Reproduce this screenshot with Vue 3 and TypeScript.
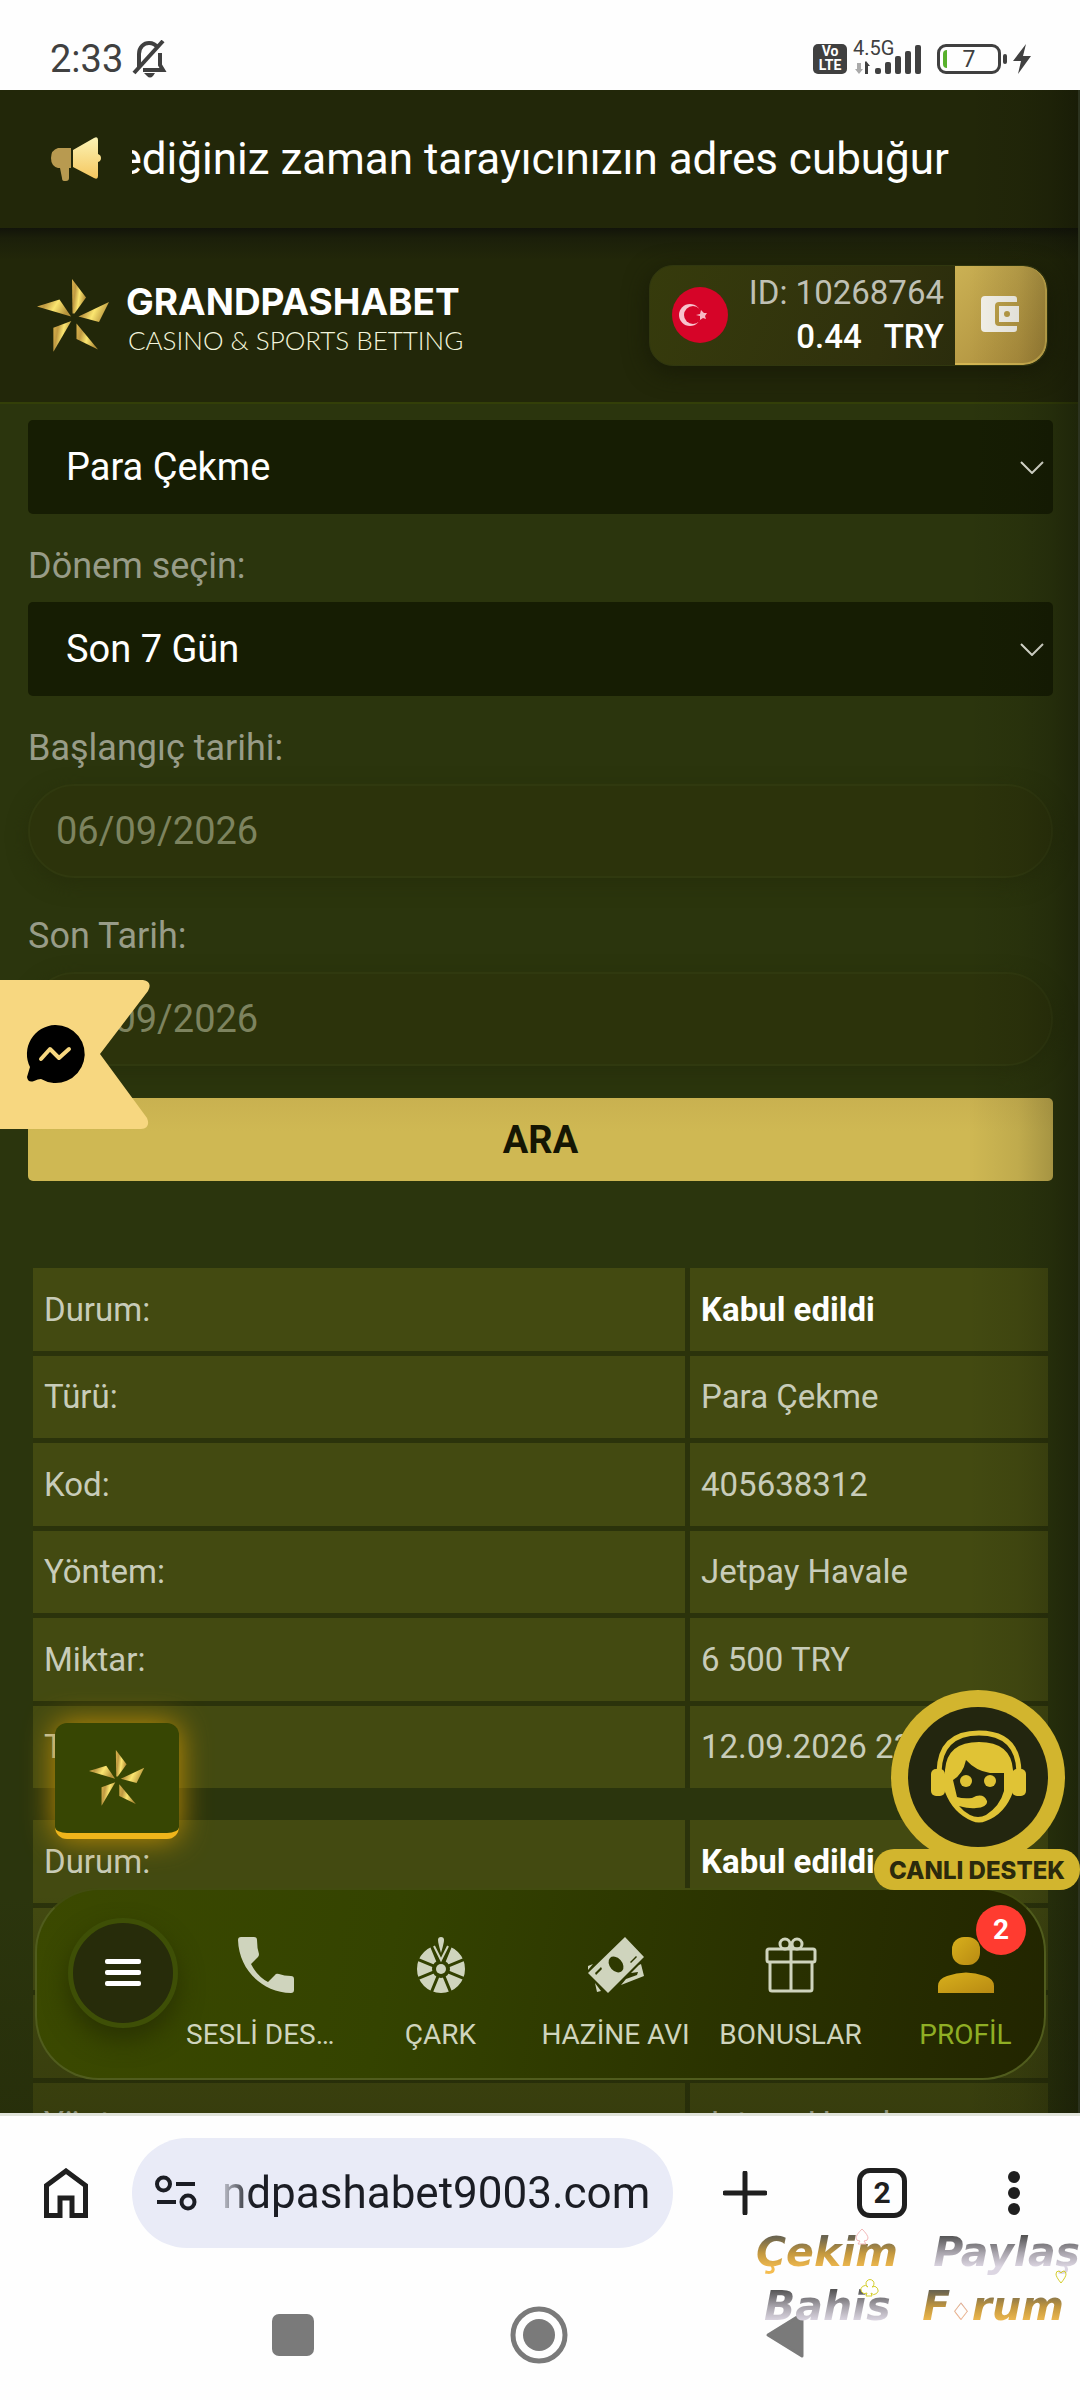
<script setup lang="ts">
import { ref } from 'vue'

interface Row {
  label: string
  value: string
  strong?: boolean
}

const kind = ref('Para Çekme')
const period = ref('Son 7 Gün')
const startDate = ref('06/09/2026')
const endDate = ref('13/09/2026')

const records: Row[][] = [
  [
    { label: 'Durum:', value: 'Kabul edildi', strong: true },
    { label: 'Türü:', value: 'Para Çekme' },
    { label: 'Kod:', value: '405638312' },
    { label: 'Yöntem:', value: 'Jetpay Havale' },
    { label: 'Miktar:', value: '6 500 TRY' },
    { label: 'Tarih:', value: '12.09.2026 23:10' },
  ],
  [
    { label: 'Durum:', value: 'Kabul edildi', strong: true },
    { label: 'Türü:', value: 'Para Çekme' },
    { label: 'Kod:', value: '405638297' },
    { label: 'Yöntem:', value: 'Jetpay Havale' },
  ],
]

const blades = [
  '35,0 49,18.5 37.5,34.5 35.5,34.5',
  '72,23 62,43 41.5,37.5',
  '39.5,44.5 39.5,60 61,70.5',
  '34.3,42 16.4,48.7 16.4,72.7',
  '0,27.5 22.5,20.5 34,37.5',
]
</script>

<template>
  <div class="screen">
    <div class="status">
      <div class="status-left">
        <span class="clock">2:33</span>
        <svg class="bell" viewBox="0 0 36 38" fill="none" stroke="#404040" stroke-width="4">
          <path d="M8 27V14c0-7 5-11 10-11 4 0 7 2 9 5M29 13v12l3 5H12" />
          <path d="M32 1 3 33" />
          <path d="M13 33h11l-2 3q-3 3-6 0z" fill="#404040" stroke="none" />
        </svg>
      </div>
      <div class="status-right">
        <span class="volte"><span>Vo</span><span>LTE</span></span>
        <span class="signal">
          <span class="net">4.5G</span>
          <svg viewBox="0 0 72 30" fill="#404040">
            <path d="M4 19h4v6h2l-4 5-4-5h2z" fill="#aaa" />
            <path d="M12 30h3V22h2l-4-5-1 1z" />
            <rect x="22" y="24" width="6" height="6" rx="2" />
            <rect x="32" y="18" width="6" height="12" rx="2" />
            <rect x="42" y="12" width="6" height="18" rx="2" />
            <rect x="52" y="7" width="6" height="23" rx="2" />
            <rect x="62" y="1" width="6" height="29" rx="2" />
          </svg>
        </span>
        <span class="battery"><span class="charge"></span>7</span>
        <svg class="bolt" viewBox="0 0 20 30" fill="#404040"><path d="M14 0 1 17h8L6 30 19 12h-8z" /></svg>
      </div>
    </div>

    <div class="page">
      <svg class="defs" aria-hidden="true">
        <defs>
          <linearGradient id="gold" x1="0" y1="0" x2="1" y2="0.3">
            <stop offset="0" stop-color="#dcb44c" />
            <stop offset="0.3" stop-color="#c09a42" />
            <stop offset="0.6" stop-color="#fbe670" />
            <stop offset="1" stop-color="#b8943c" />
          </linearGradient>
          <linearGradient id="horn" x1="0" y1="0" x2="0" y2="1">
            <stop offset="0" stop-color="#fbf3b5" />
            <stop offset="1" stop-color="#f5c75f" />
          </linearGradient>
          <linearGradient id="person" x1="0" y1="0" x2="1" y2="1">
            <stop offset="0" stop-color="#d8b01c" />
            <stop offset="1" stop-color="#b88a12" />
          </linearGradient>
        </defs>
      </svg>

      <div class="ticker">
        <svg class="horn" viewBox="0 0 50 44">
          <path d="M7 11h13v20h-2v10q0 3-3 3h-2q-2 0-2-3l-2-10H7q-7-2-7-10T7 11z" fill="#b89a50" />
          <path d="M22 13 43 1q4-2 4 2v14q3 1 3 4t-3 4v14q0 4-4 2L22 30z" fill="url(#horn)" />
        </svg>
        <div class="ticker-text"><span>ediğiniz zaman tarayıcınızın adres cubuğur</span></div>
      </div>

      <header class="header">
        <a class="brand" href="#">
          <svg class="brand-star" viewBox="0 0 73 73">
            <polygon v-for="b in blades" :key="b" :points="b" fill="url(#gold)" />
          </svg>
          <span class="brand-text">
            <span class="brand-name">GRANDPASHABET</span>
            <span class="brand-sub">CASINO &amp; SPORTS BETTING</span>
          </span>
        </a>
        <div class="balance">
          <svg class="flag" viewBox="0 0 56 56">
            <circle cx="28" cy="28" r="28" fill="#d60428" />
            <circle cx="18" cy="28" r="11" fill="#f7c3cd" />
            <circle cx="21" cy="28" r="9" fill="#d60428" />
            <path d="m24 28 4-1 1-4 3 3 3 0-2 3 1 3-3-1-3 2v-4z" fill="#f7b9c5" />
          </svg>
          <div class="account">
            <span class="account-id">ID: 10268764</span>
            <span class="account-sum"><span>0.44</span><span>TRY</span></span>
          </div>
          <button class="wallet" type="button" aria-label="Cüzdan">
            <svg viewBox="0 0 38 36">
              <path d="M4 0h29q3 0 3 3v3H18q-4 0-4 4v16q0 4 4 4h18v3q0 3-3 3H4q-4 0-4-4V4q0-4 4-4z" fill="#f4f2ea" />
              <path d="M18 10h20v16H18zM26 15a3 3 0 1 0 0 6 3 3 0 0 0 0-6z" fill="#f4f2ea" fill-rule="evenodd" />
            </svg>
          </button>
        </div>
      </header>

      <main class="content">
        <form class="filters" @submit.prevent>
          <div class="select-box">
            <select v-model="kind" aria-label="Tür"><option>Para Çekme</option></select>
            <svg class="chevron" viewBox="0 0 24 13"><path d="m1 1 11 11L23 1" fill="none" stroke="#e6e8dc" stroke-width="2" /></svg>
          </div>
          <label for="period">Dönem seçin:</label>
          <div class="select-box">
            <select id="period" v-model="period"><option>Son 7 Gün</option></select>
            <svg class="chevron" viewBox="0 0 24 13"><path d="m1 1 11 11L23 1" fill="none" stroke="#e6e8dc" stroke-width="2" /></svg>
          </div>
          <label for="start">Başlangıç tarihi:</label>
          <input id="start" v-model="startDate" type="text" />
          <label for="end">Son Tarih:</label>
          <input id="end" v-model="endDate" type="text" />
          <button class="search" type="submit">ARA</button>
        </form>

        <table v-for="(rows, i) in records" :key="i" class="record">
          <tbody>
            <tr v-for="row in rows" :key="row.label">
              <th scope="row">{{ row.label }}</th>
              <td :class="{ strong: row.strong }">{{ row.value }}</td>
            </tr>
          </tbody>
        </table>
      </main>

      <div class="edge"></div>

      <button class="ribbon" type="button" aria-label="Messenger">
        <svg viewBox="0 0 150 149">
          <path d="M0 0h143q10 2 5 11L100 74l47 64q4 10-6 11H0z" fill="#f7d780" />
          <path d="M55 45a29 29 0 1 1-14 54q-3 0-7 2-6 2-7-4l3-10A29 29 0 0 1 55 45z" fill="#000" />
          <path d="m41 79 9-10 9 9 10-9" fill="none" stroke="#f7d780" stroke-width="4" stroke-linecap="round" stroke-linejoin="round" />
        </svg>
      </button>

      <button class="star-button" type="button" aria-label="Oyunlar">
        <svg viewBox="0 0 73 73">
          <polygon v-for="b in blades" :key="b" :points="b" fill="url(#gold)" />
        </svg>
      </button>

      <nav class="dock">
        <button class="menu" type="button" aria-label="Menü">
          <svg viewBox="0 0 36 28" fill="#fff">
            <rect width="36" height="5" rx="2" /><rect y="11" width="36" height="5" rx="2" /><rect y="22" width="36" height="5" rx="2" />
          </svg>
        </button>
        <a class="item" href="#">
          <svg viewBox="0 0 56 56"><path d="M3 0h13q3 0 3 3 0 8 2 14 0 2-1 3l-7 7q6 12 17 18l7-7q1-2 4-1 5 2 12 2 3 0 3 3v11q0 3-3 3C24 55 1 33 0 3q0-3 3-3z" fill="#cfd4bd" /></svg>
          <span class="cut">SESLİ DES…</span>
        </a>
        <a class="item" href="#">
          <svg viewBox="0 0 56 56">
            <mask id="spokes" maskUnits="userSpaceOnUse" x="0" y="0" width="56" height="56">
              <rect width="56" height="56" fill="#fff" />
              <path d="m17.600 6.900 20.800 50.200M38.400 6.900 17.600 57.100M2.900 21.600 53.100 42.400M2.900 42.400 53.100 21.600" stroke="#000" stroke-width="3" />
              <path d="M18 0h20v8L28 32 18 8z" fill="#000" />
            </mask>
            <circle cx="28" cy="32" r="16.500" fill="none" stroke="#cfd4bd" stroke-width="15" mask="url(#spokes)" />
            <circle cx="28" cy="32" r="5" fill="#cfd4bd" />
            <path d="m21 9 7 14 7-14" fill="none" stroke="#cfd4bd" stroke-width="2" />
            <path d="M25 3q0-3 3-3t3 3-3 13q-3-10-3-13z" fill="#cfd4bd" />
          </svg>
          <span>ÇARK</span>
        </a>
        <a class="item" href="#">
          <svg viewBox="0 0 56 56">
            <path d="m0 29 5-2-5 6zm7 17 6 8-4 1zM53 27l3 12-23 9 5-6 11-4 1-3-7 1 8-8z" fill="#cfd4bd" />
            <path d="M37 0 56 20 20 56 0 36zM22 21a5 7 -40 1 0 12 13 5 7 -40 0 0-12-13zM7 36l6-6 1 2-6 6zM42 25l6-6 1 1-6 6z" fill="#cfd4bd" fill-rule="evenodd" />
          </svg>
          <span>HAZİNE AVI</span>
        </a>
        <a class="item" href="#">
          <svg viewBox="0 0 56 56" fill="none" stroke="#cfd4bd" stroke-width="3">
            <rect x="4" y="12" width="48" height="13" rx="2" />
            <path d="M7 25v27q0 2 2 2h38q2 0 2-2V25M28 6v48" />
            <circle cx="22" cy="7" r="5" /><circle cx="34" cy="7" r="5" />
          </svg>
          <span>BONUSLAR</span>
        </a>
        <a class="item active" href="#">
          <svg viewBox="0 0 56 56" fill="url(#person)">
            <rect x="14" y="0" width="28" height="28" rx="12" />
            <path d="M0 56v-7q0-7 9-10 19-7 38 0 9 3 9 10v7z" />
          </svg>
          <span>PROFİL</span>
          <b class="badge">2</b>
        </a>
      </nav>

      <button class="support" type="button">
        <svg viewBox="0 0 206 180">
          <circle cx="104" cy="87" r="87" fill="#d2b52e" />
          <circle cx="104" cy="87" r="70" fill="#23260f" />
          <path d="M65 82Q66 43 105 43t40 39" fill="none" stroke="#e0c335" stroke-width="5" />
          <path d="M71 80q2-28 34-28t34 28v22q-8 22-27 29-7 3-14 0-19-8-27-29z" fill="#e0c335" />
          <path d="M79 90q10-6 13-20 10 11 24 13h14v18q-4 15-18 24-8 4-16 0-7-4-11-9 11 3 17 2 12-1 11-7-4-9-15-3-9 1-15-1z" fill="#23260f" />
          <circle cx="92" cy="91" r="6" fill="#e0c335" /><circle cx="116" cy="91" r="6" fill="#e0c335" />
          <rect x="57" y="79" width="14" height="27" rx="5" fill="#e0c335" />
          <rect x="138" y="79" width="14" height="27" rx="5" fill="#e0c335" />
        </svg>
        <span>CANLI DESTEK</span>
      </button>
    </div>

    <div class="browser">
      <button class="plain" type="button" aria-label="Ana sayfa">
        <svg width="44" height="50" viewBox="0 0 44 50"><path d="M2.500 17.500 22 3l19.500 14.500v30H28V30H16v17.500H2.500z" fill="none" stroke="#1f1f1f" stroke-width="5" /></svg>
      </button>
      <div class="address">
        <svg width="42" height="36" viewBox="0 0 42 36" fill="none" stroke="#1b1d24" stroke-width="4">
          <circle cx="8.500" cy="9" r="6.500" /><circle cx="33" cy="27" r="6.500" />
          <path d="M21 9h19M2 27h19" />
        </svg>
        <span>ndpashabet9003.com</span>
      </div>
      <button class="plain plus" type="button" aria-label="Yeni sekme">
        <svg width="44" height="44" viewBox="0 0 44 44"><path d="M22 2v40M2 22h40" stroke="#1f1f1f" stroke-width="5" stroke-linecap="round" /></svg>
      </button>
      <button class="plain tabs" type="button">2</button>
      <button class="plain dots" type="button" aria-label="Daha fazla">
        <svg width="12" height="46" viewBox="0 0 12 46" fill="#1f1f1f"><circle cx="6" cy="7" r="6" /><circle cx="6" cy="23" r="6" /><circle cx="6" cy="39" r="6" /></svg>
      </button>
    </div>

    <div class="system">
      <button class="plain" type="button" aria-label="Son uygulamalar">
        <svg width="42" height="42" viewBox="0 0 42 42"><rect width="42" height="42" rx="7" fill="#7a7a7a" /></svg>
      </button>
      <button class="plain" type="button" aria-label="Ana ekran">
        <svg width="58" height="58" viewBox="0 0 58 58"><circle cx="29" cy="29" r="26" fill="none" stroke="#7a7a7a" stroke-width="5" /><circle cx="29" cy="29" r="16" fill="#7a7a7a" /></svg>
      </button>
      <button class="plain" type="button" aria-label="Geri">
        <svg width="42" height="48" viewBox="0 0 42 48"><path d="M4 24 38 3v42z" fill="#7a7a7a" stroke="#7a7a7a" stroke-width="3" stroke-linejoin="round" /></svg>
      </button>
      <div class="mark">
        <div class="mark-line"><span class="warm">Çekim</span><span class="cool">Paylaş</span></div>
        <div class="mark-line second"><span class="cool">Bahis</span><span class="warm">F<i>♢</i>rum</span></div>
        <svg class="suits" viewBox="0 0 324 110" fill="none" stroke-width="1">
          <path d="M106 4q6 6 6 9 0 3-4 3l2 3h-8l2-3q-4 0-4-3 0-3 6-9z" stroke="#f3b9b9" fill="#fff" />
          <path d="M305 58q-5-6-5-9 0-3 3-3l2 2 2-2q3 0 3 3 0 3-5 9z" stroke="#d4ce2c" />
          <path d="M112 62a4 4 0 1 1 4 0 4 4 0 1 1-1 6l1 3h-6l1-3a4 4 0 1 1 1-6z" stroke="#d4ce2c" fill="#fff" />
        </svg>
      </div>
    </div>
  </div>
</template>

<style>
html,
body {
  margin: 0;
  background: #fff;
}
</style>

<style scoped>
* {
  box-sizing: border-box;
}

.screen {
  display: flex;
  flex-direction: column;
  height: 100vh;
  overflow: hidden;
  background: #fefefe;
  font-family: Roboto, 'Noto Sans', sans-serif;
}

button,
select,
input {
  margin: 0;
  padding: 0;
  border: 0;
  font: inherit;
  color: inherit;
  appearance: none;
}

svg {
  display: block;
}

a {
  color: inherit;
  text-decoration: none;
}

/* phone status bar */
.status {
  display: flex;
  flex: none;
  align-items: center;
  justify-content: space-between;
  height: 90px;
  padding: 28px 48px 0 50px;
  color: #404040;
}

.status-left,
.status-right {
  display: flex;
  align-items: center;
}

.status-left {
  gap: 8px;
}

.clock {
  font-size: 38px;
}

.bell {
  width: 36px;
  height: 38px;
}

.volte {
  display: flex;
  flex-direction: column;
  align-items: center;
  width: 34px;
  height: 30px;
  margin-right: 6px;
  border-radius: 5px;
  background: #404040;
  color: #fff;
  font-size: 14px;
  font-weight: 700;
  line-height: 14px;
}

.signal {
  position: relative;
  width: 72px;
  height: 30px;
}

.signal svg {
  width: 72px;
  height: 30px;
}

.net {
  position: absolute;
  left: 0;
  bottom: 16px;
  font-size: 20px;
  line-height: 20px;
}

.battery {
  position: relative;
  display: flex;
  align-items: center;
  justify-content: center;
  width: 64px;
  height: 30px;
  margin: 0 11px 0 12px;
  border: 3px solid #404040;
  border-radius: 9px;
  font-size: 23px;
}

.battery::after {
  content: '';
  position: absolute;
  right: -9px;
  top: 7px;
  width: 4px;
  height: 10px;
  border-radius: 2px;
  background: #404040;
}

.charge {
  position: absolute;
  left: 3px;
  top: 3px;
  width: 4px;
  height: 18px;
  border-radius: 4px 0 0 4px;
  background: #58b12c;
}

.bolt {
  width: 20px;
  height: 30px;
}

/* web page */
.page {
  position: relative;
  flex: 1;
  min-height: 0;
  overflow: hidden;
  border-bottom: 3px solid #e0e3da;
  background: #2b350d;
}

.defs {
  position: absolute;
  width: 0;
  height: 0;
}

.ticker {
  display: flex;
  align-items: center;
  height: 138px;
  padding: 0 131px 0 51px;
  background: #222709;
}

.horn {
  flex: none;
  width: 50px;
  height: 44px;
  margin-right: 31px;
}

.ticker-text {
  display: flex;
  flex: 1;
  justify-content: flex-end;
  min-width: 0;
  overflow: hidden;
  color: #fff;
  font-size: 44px;
  line-height: 56px;
  white-space: nowrap;
}

.header {
  display: flex;
  align-items: center;
  justify-content: space-between;
  height: 176px;
  padding: 0 32px 0 37px;
  border-bottom: 2px solid #333f08;
  background: linear-gradient(#12140a, #1b1f0a 10px, #222709 32px);
}

.brand {
  display: flex;
  align-items: center;
  gap: 16px;
}

.brand-star {
  width: 73px;
  height: 73px;
}

.brand-text {
  display: flex;
  flex-direction: column;
  padding-top: 10px;
  color: #fff;
  white-space: nowrap;
}

.brand-name {
  font-family: Inter, sans-serif;
  font-size: 37px;
  font-weight: 700;
  line-height: 40px;
}

.brand-sub {
  padding-left: 2px;
  font-family: Lato, sans-serif;
  font-size: 26px;
  font-weight: 300;
  line-height: 36px;
  color: #f3f5dc;
}

.balance {
  display: flex;
  align-items: center;
  width: 399px;
  height: 101px;
  padding-left: 22px;
  border: 1px solid #30370f;
  border-radius: 24px;
  background: linear-gradient(110deg, #363b0c, #30310d 60%, #25280c);
  box-shadow: 0 6px 24px #181b07;
  overflow: hidden;
}

.flag {
  flex: none;
  width: 56px;
  height: 56px;
}

.account {
  display: flex;
  flex: 1;
  flex-direction: column;
  align-items: flex-end;
  padding-right: 11px;
  line-height: 44px;
  white-space: nowrap;
}

.account-id {
  color: #bfc0b4;
  font-size: 33px;
}

.account-sum {
  display: flex;
  gap: 22px;
  color: #fff;
  font-size: 33px;
  font-weight: 500;
}

.wallet {
  display: flex;
  align-items: center;
  justify-content: center;
  width: 92px;
  height: 100%;
  border-right: 2px solid #d3b552;
  border-bottom: 2px solid #d3b552;
  border-radius: 0 24px 24px 0;
  background: linear-gradient(135deg, #cbb154, #a98a3a);
}

.wallet svg {
  width: 38px;
  height: 36px;
}

.content {
  padding: 16px 27px 0 28px;
}

.filters {
  display: flex;
  flex-direction: column;
}

.filters label {
  padding: 32px 0 16px;
  color: #989c88;
  font-size: 36px;
  line-height: 40px;
}

.select-box {
  position: relative;
}

.select-box select {
  width: 100%;
  height: 94px;
  padding: 0 38px;
  border-radius: 5px;
  background: #161d03;
  color: #fff;
  font-size: 38px;
}

.chevron {
  position: absolute;
  right: 9px;
  top: 41px;
  width: 24px;
  height: 13px;
  pointer-events: none;
}

.filters input {
  height: 94px;
  margin-bottom: 6px;
  padding: 0 26px;
  border: 2px solid #30390f;
  border-radius: 47px;
  background: #2c330b;
  box-shadow: 0 6px 20px #272f0b;
  color: #7d835f;
  font-size: 38px;
}

.search {
  height: 83px;
  margin-top: 26px;
  border-radius: 5px;
  background: linear-gradient(#c9b150, #cfb853 40%);
  color: #151603;
  font-size: 38px;
  font-weight: 700;
}

.record {
  width: calc(100% - 10px);
  margin: 32px 5px 0;
  border-collapse: separate;
  border-spacing: 0;
  table-layout: fixed;
  color: #c8ccb9;
  font-size: 33px;
  line-height: 40px;
}

.filters + .record {
  margin-top: 87px;
}

.record th,
.record td {
  height: 88px;
  padding: 0 11px;
  border-bottom: 5px solid #2b330b;
  background: #434a11;
  font-weight: 400;
  text-align: left;
}

.record tr:nth-child(even) > * {
  height: 87px;
}

.record tr:last-child > * {
  height: 82px;
  border-bottom: 0;
}

.record th {
  width: 657px;
  border-right: 5px solid #2b330b;
}

.record td.strong {
  color: #fff;
  font-weight: 700;
}

/* shade along the right side and towards the foot of the page */
.edge {
  position: absolute;
  inset: 0;
  border-right: 2px solid #2c331f;
  background:
    linear-gradient(to left, #0c0e0466, #0c0e0433 28px, #0c0e0414 60px, transparent 110px),
    linear-gradient(to top, #20240655, transparent 220px);
  pointer-events: none;
}

.ribbon {
  position: absolute;
  left: 0;
  top: 890px;
  width: 150px;
  height: 149px;
  background: none;
}

.star-button {
  position: absolute;
  left: 55px;
  bottom: 274px;
  display: flex;
  align-items: center;
  justify-content: center;
  width: 124px;
  height: 116px;
  border-bottom: 6px solid #efb51b;
  border-radius: 12px;
  background: #374603;
  box-shadow: 0 0 30px #c48f05;
}

.star-button svg {
  width: 56px;
  height: 56px;
}

.dock {
  position: absolute;
  left: 35px;
  right: 34px;
  bottom: 33px;
  display: flex;
  align-items: center;
  height: 192px;
  padding-left: 31px;
  border: 2px solid #505c1d;
  border-top-color: #424c10;
  border-radius: 64px;
  background: linear-gradient(100deg, #3b4900, #344300 35%, #2a3200 70%, #222500);
}

.menu {
  display: flex;
  flex: none;
  align-items: center;
  justify-content: center;
  width: 110px;
  height: 110px;
  margin-bottom: 22px;
  border: 5px solid #3e4f06;
  border-radius: 50%;
  background: #272c0a;
  box-shadow: 0 12px 24px #2a3302;
}

.menu svg {
  width: 36px;
  height: 28px;
}

.item {
  position: relative;
  display: flex;
  flex: 1 0 175px;
  flex-direction: column;
  align-items: center;
  padding-top: 22px;
  color: #cfd4bd;
  font-size: 28px;
  line-height: 36px;
  white-space: nowrap;
}

.item svg {
  width: 56px;
  height: 56px;
  margin-bottom: 24px;
}

.cut {
  align-self: flex-start;
  padding-left: 8px;
}

.active {
  color: #8fae24;
}

.badge {
  position: absolute;
  left: 98px;
  top: -10px;
  width: 50px;
  height: 50px;
  border-radius: 50%;
  background: #ff3b30;
  color: #fff;
  font-size: 28px;
  font-weight: 700;
  line-height: 50px;
  text-align: center;
}

.support {
  position: absolute;
  right: 0;
  bottom: 223px;
  width: 206px;
  background: none;
}

.support svg {
  width: 206px;
  height: 180px;
}

.support span {
  display: block;
  height: 41px;
  margin-top: -21px;
  border-radius: 20px;
  background: #d2b52e;
  position: relative;
  color: #2b2a0c;
  font-family: Inter, sans-serif;
  font-size: 24px;
  font-weight: 800;
  line-height: 43px;
  text-align: center;
}

/* browser toolbar */
.browser {
  display: flex;
  flex: none;
  align-items: center;
  height: 154px;
  padding: 0 60px 0 44px;
}

.plain {
  flex: none;
  background: none;
}

.address {
  display: flex;
  flex: 1;
  align-items: center;
  gap: 25px;
  min-width: 0;
  height: 110px;
  margin-left: 44px;
  padding: 0 23px;
  border-radius: 55px;
  background: #e9ebf7;
}

.address svg {
  flex: none;
}

.address span {
  background: linear-gradient(to right, #1b1d2430, #1b1d24 30px);
  background-clip: text;
  color: transparent;
  font-size: 44px;
  line-height: 60px;
  white-space: nowrap;
}

.plus {
  margin: 0 90px 0 50px;
}

.tabs {
  width: 50px;
  height: 50px;
  border: 5px solid #1f1f1f;
  border-radius: 13px;
  color: #1f1f1f;
  font-size: 30px;
  font-weight: 700;
  line-height: 40px;
}

.dots {
  margin-left: 101px;
}

/* system navigation */
.system {
  position: relative;
  display: flex;
  flex: none;
  align-items: center;
  justify-content: space-between;
  height: 130px;
  padding: 0 274px 0 272px;
}

.mark {
  position: absolute;
  right: 0;
  top: -45px;
  width: 324px;
  font-family: 'DejaVu Sans', sans-serif;
  font-size: 41px;
  font-style: italic;
  font-weight: 700;
  pointer-events: none;
}

.mark-line {
  display: flex;
  justify-content: space-between;
  height: 54px;
  line-height: 54px;
}

.second {
  padding: 0 16px 0 8px;
}

.warm,
.cool {
  background: linear-gradient(#6a6450 12px, #c2973f 28px, #f5bd50 44px);
  background-clip: text;
  color: transparent;
}

.cool {
  background-image: linear-gradient(#505050 10px, #a9a5ad 28px, #dcd6e2 42px);
}

.warm i {
  color: #f0b5b5;
  font-size: 24px;
  font-style: normal;
  font-weight: 400;
}

.suits {
  position: absolute;
  left: 0;
  top: 0;
  width: 324px;
  height: 110px;
}
</style>
